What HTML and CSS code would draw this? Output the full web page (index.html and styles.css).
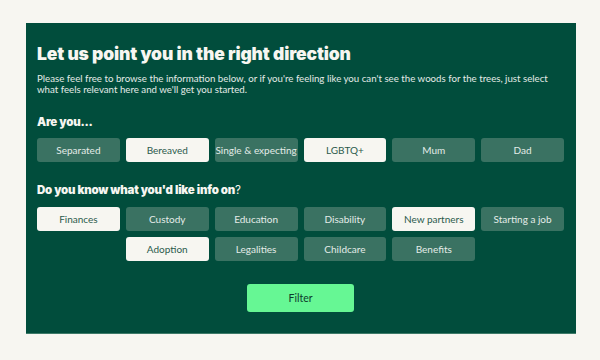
FILE: index.html
```html
<!DOCTYPE html>
<html lang="en">
<head>
    <meta charset="UTF-8">
    <meta name="viewport" content="width=device-width, initial-scale=1.0">
    <title>Let us point you in the right direction</title>
    <link rel="stylesheet" href="styles.css">
</head>
<body>
    <section class="finder">
        <h1>Let us point you in the right direction</h1>
        <p class="intro">Please feel free to browse the information below, or if you're feeling like you can't see the woods for the trees, just select what feels relevant here and we'll get you started.</p>

        <h2>Are you...</h2>
        <div class="chips">
            <button class="chip">Separated</button>
            <button class="chip is-on">Bereaved</button>
            <button class="chip">Single &amp; expecting</button>
            <button class="chip is-on">LGBTQ+</button>
            <button class="chip">Mum</button>
            <button class="chip">Dad</button>
        </div>

        <h2 class="topics-title">Do you know what you'd like info on<span class="q">?</span></h2>
        <div class="chips">
            <button class="chip is-on">Finances</button>
            <button class="chip">Custody</button>
            <button class="chip">Education</button>
            <button class="chip">Disability</button>
            <button class="chip is-on">New partners</button>
            <button class="chip">Starting a job</button>
            <button class="chip is-on">Adoption</button>
            <button class="chip">Legalities</button>
            <button class="chip">Childcare</button>
            <button class="chip">Benefits</button>
        </div>

        <div class="actions">
            <button class="filter-btn">Filter</button>
        </div>
    </section>
</body>
</html>
```

FILE: styles.css
```css
body {
    margin: 0;
    padding: 23px 24px 26px 26px;
    background: #f7f6f1;
    font-family: Lato, "Noto Sans", sans-serif;
}
.finder {
    background: #014d3c;
    color: #f7f6f1;
    padding: 20px 12px 21px 11px;
    border-bottom: 1px solid #3d7a68;
}
h1 {
    margin: 0;
    font-family: Inter, sans-serif;
    font-weight: 900;
    font-size: 17.5px;
    line-height: 22px;
    letter-spacing: -0.15px;
}
.intro {
    margin: 8px 0 0;
    font-size: 9.7px;
    line-height: 11px;
    color: #e4ebe7;
}
h2 {
    margin: 20px 0 8px;
    font-family: Inter, sans-serif;
    font-weight: 900;
    font-size: 11.5px;
    line-height: 15px;
    letter-spacing: -0.2px;
}
.topics-title {
    margin-top: 21px;
    margin-bottom: 9px;
}
.q {
    font-weight: 400;
}
.chips {
    display: flex;
    flex-wrap: wrap;
    justify-content: center;
    gap: 6px;
}
.chip {
    width: calc((100% - 30px) / 6);
    height: 24px;
    padding: 0;
    border: none;
    border-radius: 3px;
    background: #3a7262;
    color: #e4ece8;
    font-family: Lato, sans-serif;
    font-size: 10px;
    cursor: pointer;
}
.chip.is-on {
    background: #f7f6f1;
    color: #2b5a4c;
}
.actions {
    display: flex;
    justify-content: center;
    margin-top: 23px;
}
.filter-btn {
    width: 107px;
    height: 28px;
    border: none;
    border-radius: 3px;
    background: #66f794;
    color: #0d3b2c;
    font-family: Lato, sans-serif;
    font-size: 10.5px;
    cursor: pointer;
}
```
